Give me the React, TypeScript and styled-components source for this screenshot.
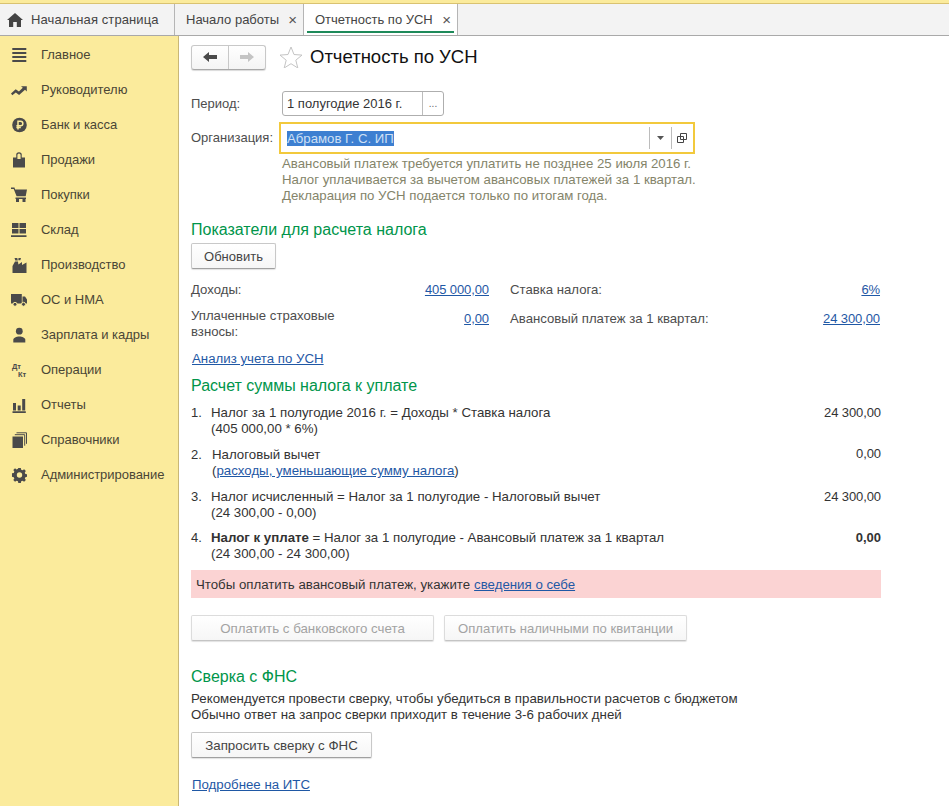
import React from "react";
import styled, { createGlobalStyle } from "styled-components";

const Global = createGlobalStyle`
  html, body { margin: 0; padding: 0; height: 100%; background: #fff; overflow: hidden; }
  body { font-family: "Liberation Sans", Arial, sans-serif; font-size: 13px; color: #333; }
  #root { height: 806px; }
`;

const Page = styled.div`
  width: 949px; height: 806px; display: flex; flex-direction: column; overflow: hidden;
`;
const TopStrip = styled.div`
  height: 3px; background: #fbeb9c; border-bottom: 1px solid #d9c271; flex: none;
`;
const TabBar = styled.div`
  height: 31px; flex: none; display: flex; background: #f3f3f3; border-bottom: 1px solid #a9a9a9;
`;
const HomeTab = styled.div`
  width: 175px; box-sizing: border-box; display: flex; align-items: center; gap: 8px; padding: 0 0 0 7px;
  border-right: 1px solid #b5b5b5; color: #444; font-size: 13px; letter-spacing: 0.1px;
  svg { flex: none; }
`;
const Tab = styled.div<{ $active?: boolean; $w: number }>`
  width: ${p => p.$w}px; box-sizing: border-box; position: relative; display: flex; align-items: center;
  justify-content: space-between; padding: 0 6px 0 11px;
  border-right: 1px solid #b5b5b5; color: #444; background: ${p => (p.$active ? "#fff" : "transparent")};
  ${p => p.$active && `&::after { content: ""; position: absolute; left: 3px; right: 3px; bottom: 2px; height: 2px; background: #1e8a5a; }`}
`;
const Close = styled.span`
  font-size: 15px; color: #555; line-height: 1;
`;
const Body = styled.div`
  flex: 1; display: flex; min-height: 0;
`;
const Sidebar = styled.nav`
  width: 179px; flex: none; box-sizing: border-box; background: #fbeb9c; border-right: 1px solid #c9b777;
  padding-top: 1px;
`;
const NavItem = styled.div`
  height: 35px; display: flex; align-items: center; color: #4a4636; font-size: 13px;
  padding-left: 11px; gap: 14px; letter-spacing: -0.03px;
  svg { flex: none; width: 16px; height: 16px; }
`;
const Main = styled.main`
  flex: 1; box-sizing: border-box; padding: 9px 68px 0 12px; min-width: 0;
`;
const TitleRow = styled.div`
  display: flex; align-items: center; height: 24px;
`;
const NavGroup = styled.div`
  display: flex; width: 75px; height: 25px; box-sizing: border-box; border: 1px solid #c8c8c8; border-bottom-color: #a8a8a8;
  border-radius: 3px; background: linear-gradient(#fff, #f4f4f4); box-shadow: 0 1px 1px rgba(0,0,0,.15);
`;
const NavBtn = styled.div<{ $right?: boolean }>`
  flex: 1; display: flex; align-items: center; justify-content: center;
  ${p => p.$right && "border-left: 1px solid #c8c8c8;"}
`;
const Star = styled.svg`
  margin-left: 13px; margin-right: 7px; flex: none;
`;
const Title = styled.h1`
  margin: 0; font-size: 18.5px; font-weight: 400; color: #111;
`;
const FormRow = styled.div<{ $top: number }>`
  display: flex; align-items: center; margin-top: ${p => p.$top}px;
`;
const Label = styled.label<{ $w: number }>`
  width: ${p => p.$w}px; flex: none; color: #4d4d4d;
`;
const RaisedLabel = styled(Label)`
  margin-bottom: 2px;
`;
const PeriodField = styled.div`
  width: 162px; height: 25px; box-sizing: border-box; border: 1px solid #aeaeae; border-radius: 3px;
  display: flex; align-items: center; color: #333; padding-left: 4px;
`;
const PeriodText = styled.span` flex: 1; `;
const Dots = styled.span`
  width: 20px; height: 23px; border-left: 1px solid #bcbcbc; display: flex; align-items: center; justify-content: center;
  font-size: 10px; color: #666; line-height: 1;
`;
const OrgField = styled.div`
  width: 416px; height: 32px; box-sizing: border-box; border: 2px solid #f2c93c; display: flex; align-items: center;
  padding-left: 6px;
`;
const Selected = styled.span`
  background: #3d7fd1; color: #cfe0f5; line-height: 15px; font-size: 13.2px;
`;
const Spacer = styled.span` flex: 1; `;
const FieldBtn = styled.span`
  width: 20px; height: 22px; border-left: 1px solid #bcbcbc; display: flex; align-items: center; justify-content: center;
  flex: none; margin-right: 1px;
`;
const Notes = styled.div`
  margin: 2px 0 0 91px; color: #84846a; line-height: 16px; font-size: 13.24px; white-space: nowrap;
`;
const SectionTitle = styled.h2<{ $top: number }>`
  margin: ${p => p.$top}px 0 0; font-size: 16px; font-weight: 400; color: #00954a; line-height: 18px; white-space: nowrap;
`;
const Button = styled.button<{ $w: number; $disabled?: boolean; $size?: number }>`
  width: ${p => p.$w}px; height: 26px; box-sizing: border-box; padding: 0; font: inherit; font-size: ${p => p.$size ?? 13.3}px;
  color: ${p => (p.$disabled ? "#a3a3a3" : "#444")};
  border: 1px solid ${p => (p.$disabled ? "#dcdcdc" : "#c8c8c8")};
  border-bottom-color: ${p => (p.$disabled ? "#c4c4c4" : "#a0a0a0")};
  border-radius: 2px; background: linear-gradient(#fff, #f6f6f6); box-shadow: 0 1px 1px rgba(0,0,0,.12);
`;
const RefreshButton = styled(Button)`
  display: block; margin-top: 4px;
`;
const Indicators = styled.div`
  display: grid; grid-template-columns: 298px 370px; column-gap: 21px; row-gap: 10px; margin-top: 13px; color: #4d4d4d;
`;
const Indicator = styled.div`
  display: flex; justify-content: space-between; align-items: flex-start; line-height: 16px;
`;
const IndicatorLabel = styled.span<{ $w?: number; $top?: number }>`
  ${p => p.$w && `width: ${p.$w}px;`}
  ${p => p.$top && `padding-top: ${p.$top}px;`}
  font-size: 13.18px;
`;
const Link = styled.a`
  color: #1f58a5; text-decoration: underline;
`;
const ValueLink = styled(Link)<{ $top?: number }>`
  padding-top: ${p => p.$top ?? 0}px; letter-spacing: -0.1px;
`;
const BlockLink = styled(Link)<{ $top: number }>`
  display: block; margin: ${p => p.$top}px 0 0 1px; line-height: 16px; font-size: 13.25px;
`;
const Steps = styled.div`
  margin-top: 10px; width: 690px;
`;
const Step = styled.div<{ $gap: number }>`
  display: flex; line-height: 16px; color: #333; margin-bottom: ${p => p.$gap}px;
`;
const StepNum = styled.span<{ $w: number }>`
  width: ${p => p.$w}px; flex: none;
`;
const StepText = styled.div` flex: 1; font-size: 13.28px; `;
const StepValue = styled.span<{ $bold?: boolean; $lift?: boolean }>`
  flex: none; letter-spacing: -0.1px; ${p => p.$bold && "font-weight: 700; letter-spacing: 0;"}
  ${p => p.$lift && "margin-top: -1px;"}
`;
const Alert = styled.div`
  width: 690px; height: 28px; box-sizing: border-box; background: #fbd3d3; display: flex; align-items: center;
  padding-left: 5px; margin-top: 8px; color: #333; gap: 4px; font-size: 13.25px;
`;
const ButtonRow = styled.div`
  display: flex; gap: 10px; margin-top: 17px;
`;
const Para = styled.div`
  margin-top: 5px; line-height: 16px; color: #333; white-space: nowrap; font-size: 13.3px;
`;
const SpacedButton = styled(Button)`
  display: block; margin-top: 9px;
`;
const Doc = styled.span<{ $b?: boolean }>` ${p => p.$b && "font-weight: 700;"} `;

const ic = "#4a4a4a";
const bg = "#fbeb9c";
const icons: Record<string, React.ReactNode> = {
  menu: <path d="M1.300 1h14v2h-14zM1.300 5h14v2h-14zM1.300 9h14v2h-14zM1.300 13h14v2h-14z" fill={ic} />,
  trend: <path d="M0 11.500l4.700-4.200 3.200 2.300 3.900-3.900L10 4.200h5.800V9.500L14 7.800 8.100 13 4.800 10.400 1.300 13.300z" fill={ic} />,
  rub: <g><circle cx="8.500" cy="8" r="7.300" fill={ic} /><path d="M7 12.500V4.200h2.600a2.200 2.200 0 010 4.500H5.400M5.400 10.600h4.400" stroke={bg} strokeWidth="1.500" fill="none" /></g>,
  bag: <g><path d="M2 4.500h12V15.500H2z" fill={ic} /><path d="M5.800 7V3a2.200 2.200 0 014.400 0v4" stroke={ic} strokeWidth="1.200" fill={bg} /><path d="M1.800 3.500h3.400v2h-3.400zM10.800 3.500h3.400v2h-3.400z" fill={bg} /></g>,
  cart: <g><path d="M0 .500h3.500l.6 2H16l-1.300 6.800H5.600L2.700 2H0z" fill={ic} /><path d="M4.500 10.500h10.500v1.500H4.500z" fill={ic} /><path d="M5 11.500h3v3.500H5zM11.500 11.500h3v3.500h-3z" fill={ic} /></g>,
  grid: <path d="M1 1h6.500v5H1zM8.500 1H15v5H8.500zM1 7h6.500v4.500H1zM8.500 7H15v4.500H8.500zM0 13.300h15.500V15H0z" fill={ic} />,
  factory: <path d="M3.500 1h2.800l.5 2.500H4.300zM7.500 1h2.500L9.300 3.300H7.300zM4 4.500h3l.4 3 3.600-2.500v3L15.500 5.500V16H1.500V9z" fill={ic} />,
  truck: <g><path d="M0 2h10.800v9.500H0zM11.500 4.500h2.500l2 3v4h-4.500z" fill={ic} /><circle cx="4" cy="12.300" r="2" fill={ic} stroke={bg} /><circle cx="12.500" cy="12.300" r="2" fill={ic} stroke={bg} /></g>,
  user: <g><circle cx="8.300" cy="4.200" r="3.400" fill={ic} /><path d="M2.300 15.500v-2.800c0-2 3-3.300 6-3.300s6 1.300 6 3.300v2.800z" fill={ic} /></g>,
  chart: <path d="M2 6h3v7.500H2zM6.700 8.500h3v5h-3zM11.200 2h3v11.500h-3zM1.500 14.200h13.300V16H1.500z" fill={ic} />,
  book: <g><path d="M1.500 4.500h10.500V16H1.500z" fill={ic} /><path d="M3.800 2.700h9.900v11M5.500 0.800h10v11" stroke={ic} fill="none" /></g>,
  gear: <g fill={ic}><path d="M7.200 1h2.600l.4 1.900 1.500.6 1.600-1.100 1.800 1.800-1.100 1.600.6 1.500 1.900.4v2.600l-1.900.4-.6 1.500 1.100 1.600-1.800 1.800-1.600-1.100-1.500.6-.4 1.900H7.200l-.4-1.900-1.500-.6-1.600 1.100-1.800-1.800 1.100-1.600-.6-1.500-1.900-.4V6.700l1.900-.4.6-1.500-1.100-1.600 1.800-1.800 1.600 1.100 1.500-.6z" transform="translate(.5 0) scale(.95)" /><circle cx="8.500" cy="8" r="2.700" fill={bg} /></g>,
  dtkt: <g fill={ic} fontFamily="'Liberation Sans', sans-serif" fontWeight="700" fontSize="7.500"><text x="1" y="7">Дт</text><text x="7" y="15">Кт</text></g>,
};

const nav: [string, string][] = [
  ["menu", "Главное"], ["trend", "Руководителю"], ["rub", "Банк и касса"], ["bag", "Продажи"],
  ["cart", "Покупки"], ["grid", "Склад"], ["factory", "Производство"], ["truck", "ОС и НМА"],
  ["user", "Зарплата и кадры"], ["dtkt", "Операции"], ["chart", "Отчеты"], ["book", "Справочники"],
  ["gear", "Администрирование"],
];

export default function App() {
  return (
    <Page>
      <Global />
      <TopStrip />
      <TabBar>
        <HomeTab>
          <svg width="16" height="14" viewBox="0 0 16 14"><path d="M8 0l8 7h-2v7H9.800V9H6.200v5H2V7H0z" fill="#444" /></svg>
          Начальная страница
        </HomeTab>
        <Tab $w={129}>Начало работы <Close>×</Close></Tab>
        <Tab $w={154} $active>Отчетность по УСН <Close>×</Close></Tab>
      </TabBar>
      <Body>
        <Sidebar>
          {nav.map(([i, t]) => (
            <NavItem key={t}><svg viewBox="0 0 16 16">{icons[i]}</svg>{t}</NavItem>
          ))}
        </Sidebar>
        <Main>
          <TitleRow>
            <NavGroup>
              <NavBtn><svg width="14" height="10" viewBox="0 0 14 10"><path d="M0 5l6-5v3h8v4H6v3z" fill="#4a4a4a" /></svg></NavBtn>
              <NavBtn $right><svg width="14" height="10" viewBox="0 0 14 10"><path d="M14 5L8 0v3H0v4h8v3z" fill="#c4c4c4" /></svg></NavBtn>
            </NavGroup>
            <Star width="24" height="22" viewBox="0 0 24 22"><path d="M12 1l3 7.500 8 .6-6.200 5.100 2 7.800L12 17.700 5.200 22l2-7.800L1 9.100l8-.6z" fill="#fff" stroke="#c4c4c4" /></Star>
            <Title>Отчетность по УСН</Title>
          </TitleRow>
          <FormRow $top={22}>
            <Label $w={91}>Период:</Label>
            <PeriodField><PeriodText>1 полугодие 2016 г.</PeriodText><Dots>...</Dots></PeriodField>
          </FormRow>
          <FormRow $top={6}>
            <RaisedLabel $w={88}>Организация:</RaisedLabel>
            <OrgField>
              <Selected>Абрамов Г. С. ИП</Selected>
              <Spacer />
              <FieldBtn><svg width="7" height="4" viewBox="0 0 7 4"><path d="M0 0h7L3.500 4z" fill="#555" /></svg></FieldBtn>
              <FieldBtn><svg width="10" height="10" viewBox="0 0 10 10"><path d="M3.500.5h6v6h-6zM.5 3.500h6v6h-6z" fill="#fff" stroke="#444" /></svg></FieldBtn>
            </OrgField>
          </FormRow>
          <Notes>
            Авансовый платеж требуется уплатить не позднее 25 июля 2016 г.<br />
            Налог уплачивается за вычетом авансовых платежей за 1 квартал.<br />
            Декларация по УСН подается только по итогам года.
          </Notes>
          <SectionTitle $top={17}>Показатели для расчета налога</SectionTitle>
          <RefreshButton $w={85} $size={13}>Обновить</RefreshButton>
          <Indicators>
            <Indicator><IndicatorLabel>Доходы:</IndicatorLabel><ValueLink>405 000,00</ValueLink></Indicator>
            <Indicator><IndicatorLabel>Ставка налога:</IndicatorLabel><ValueLink>6%</ValueLink></Indicator>
            <Indicator><IndicatorLabel $w={170}>Уплаченные страховые взносы:</IndicatorLabel><ValueLink $top={3}>0,00</ValueLink></Indicator>
            <Indicator><IndicatorLabel $top={3}>Авансовый платеж за 1 квартал:</IndicatorLabel><ValueLink $top={3}>24 300,00</ValueLink></Indicator>
          </Indicators>
          <BlockLink $top={11}>Анализ учета по УСН</BlockLink>
          <SectionTitle $top={10}>Расчет суммы налога к уплате</SectionTitle>
          <Steps>
            <Step $gap={10}><StepNum $w={20}>1.</StepNum><StepText>Налог за 1 полугодие 2016 г. = Доходы * Ставка налога<br />(405 000,00 * 6%)</StepText><StepValue>24 300,00</StepValue></Step>
            <Step $gap={10}><StepNum $w={21}>2.</StepNum><StepText>Налоговый вычет<br />(<Link>расходы, уменьшающие сумму налога</Link>)</StepText><StepValue $lift>0,00</StepValue></Step>
            <Step $gap={9}><StepNum $w={20}>3.</StepNum><StepText>Налог исчисленный = Налог за 1 полугодие - Налоговый вычет<br />(24 300,00 - 0,00)</StepText><StepValue>24 300,00</StepValue></Step>
            <Step $gap={0}><StepNum $w={20}>4.</StepNum><StepText><Doc $b>Налог к уплате</Doc> = Налог за 1 полугодие - Авансовый платеж за 1 квартал<br />(24 300,00 - 24 300,00)</StepText><StepValue $bold>0,00</StepValue></Step>
          </Steps>
          <Alert>Чтобы оплатить авансовый платеж, укажите <Link>сведения о себе</Link></Alert>
          <ButtonRow>
            <Button $w={243} $disabled>Оплатить с банковского счета</Button>
            <Button $w={243} $disabled $size={13.1}>Оплатить наличными по квитанции</Button>
          </ButtonRow>
          <SectionTitle $top={27}>Сверка с ФНС</SectionTitle>
          <Para>
            Рекомендуется провести сверку, чтобы убедиться в правильности расчетов с бюджетом<br />
            Обычно ответ на запрос сверки приходит в течение 3-6 рабочих дней
          </Para>
          <SpacedButton $w={181}>Запросить сверку с ФНС</SpacedButton>
          <BlockLink $top={19}>Подробнее на ИТС</BlockLink>
        </Main>
      </Body>
    </Page>
  );
}
